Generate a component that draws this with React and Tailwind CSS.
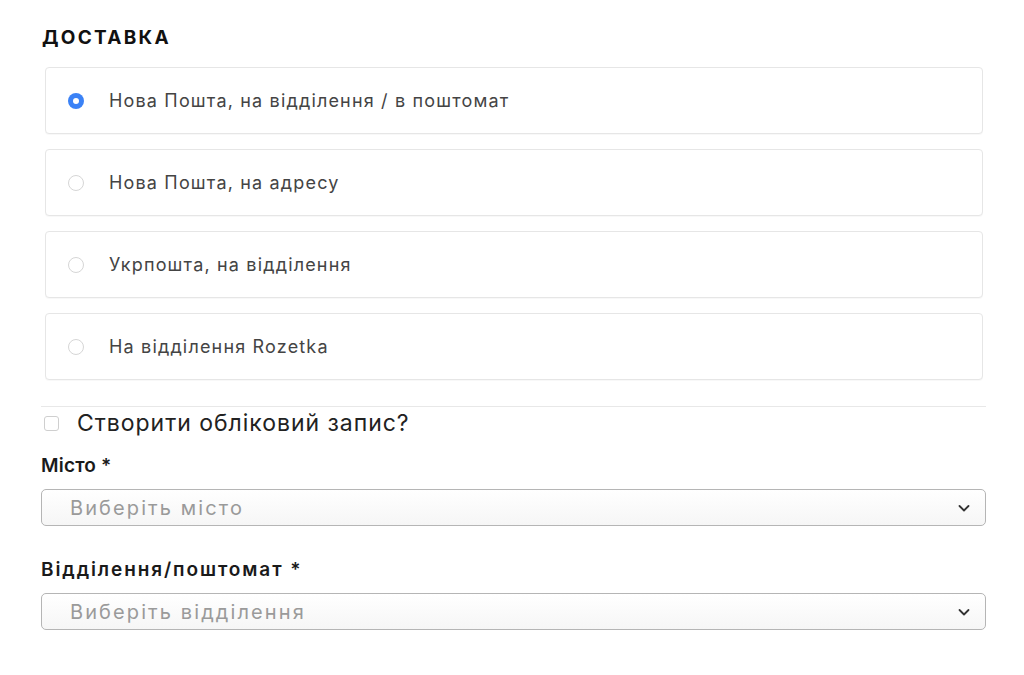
import React from "react";

const options = [
  "Нова Пошта, на відділення / в поштомат",
  "Нова Пошта, на адресу",
  "Укрпошта, на відділення",
  "На відділення Rozetka",
];

function Chevron() {
  return (
    <svg width="14" height="14" viewBox="0 0 14 14" fill="none">
      <path d="M2.5 5l4.5 4.5L11.5 5" stroke="#333" strokeWidth="1.8" strokeLinecap="round" strokeLinejoin="round" />
    </svg>
  );
}

function Select({ placeholder }) {
  return (
    <div className="flex h-[37px] items-center justify-between rounded-[5px] border border-[#b5b5b5] bg-gradient-to-b from-white to-[#f6f6f6] pl-[28px] pr-[14px]">
      <span className="text-[20px] tracking-[0.105em] text-[#9a9a9a]">{placeholder}</span>
      <Chevron />
    </div>
  );
}

export default function App() {
  const selected = 0;
  return (
    <div className="min-h-[675px] w-[1024px] bg-white font-['Inter',sans-serif]">
      <div className="pl-[41px] pr-[38px] pt-[27px]">
        <h2 className="pl-px text-[19px] font-bold leading-[22px] tracking-[0.12em] text-[#111]">ДОСТАВКА</h2>
        <div className="mt-[18px] flex flex-col gap-[15px] pl-[4px] pr-[3px]">
          {options.map((o, i) => (
            <label
              key={o}
              className="flex h-[67px] items-center rounded-[4px] border border-[#e6e6e6] bg-white pl-[22px] shadow-[0_1px_1px_rgba(0,0,0,0.03)]"
            >
              {i === selected ? (
                <span className="flex h-[16px] w-[16px] items-center justify-center rounded-full bg-[#3b82f6]">
                  <span className="h-[6px] w-[6px] rounded-full bg-white" />
                </span>
              ) : (
                <span className="h-[16px] w-[16px] rounded-full border border-[#d6d6d6] bg-white" />
              )}
              <span className="ml-[25px] text-[18px] tracking-[0.065em] text-[#444]">{o}</span>
            </label>
          ))}
        </div>
        <div className="mt-[26px] h-px bg-[#e8e8e8]" />
        <div className="mt-[2px] flex items-center pl-[3px]">
          <span className="h-[15px] w-[15px] rounded-[3px] border border-[#cfcfcf] bg-white" />
          <span className="ml-[18px] text-[23px] leading-[28px] tracking-[0.042em] text-[#222]">Створити обліковий запис?</span>
        </div>
        <div className="mt-[17px] text-[19px] font-semibold leading-[24px] tracking-[0.01em] text-[#1a1a1a]">Місто *</div>
        <div className="mt-[11px]">
          <Select placeholder="Виберіть місто" />
        </div>
        <div className="mt-[32px] text-[19px] font-semibold leading-[24px] tracking-[0.1em] text-[#1a1a1a]">Відділення/поштомат *</div>
        <div className="mt-[11px]">
          <Select placeholder="Виберіть відділення" />
        </div>
      </div>
    </div>
  );
}
